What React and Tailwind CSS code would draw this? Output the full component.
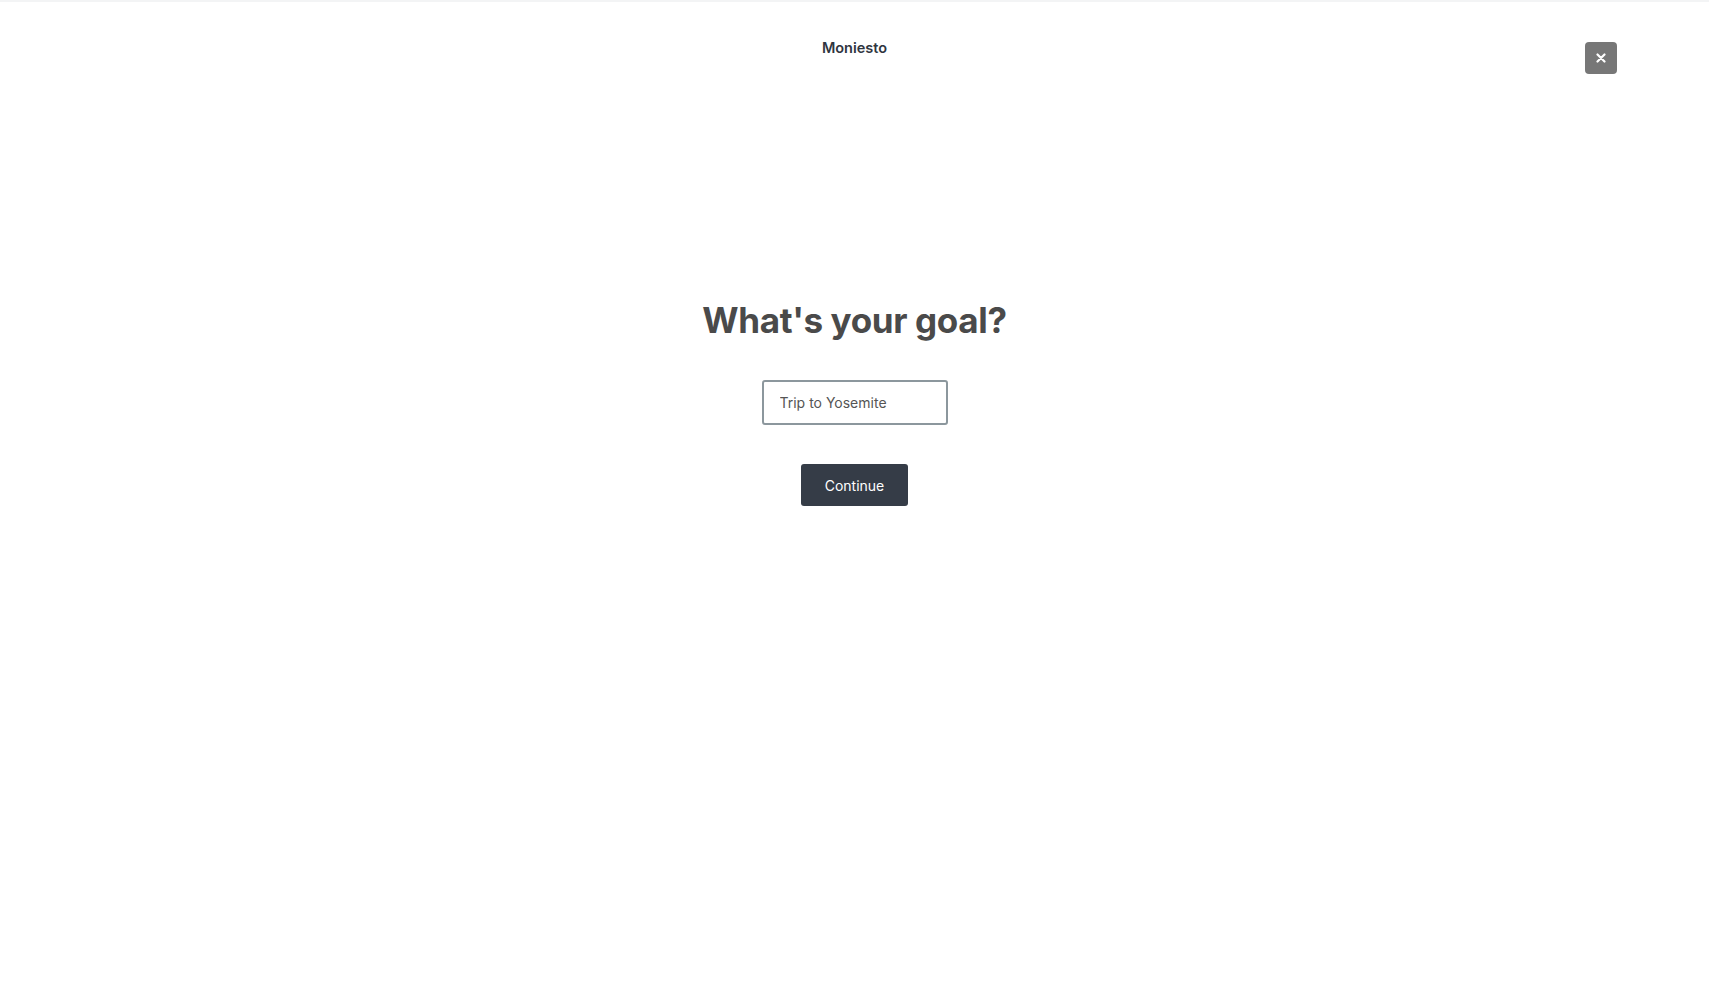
import React, { useState } from "react";

export default function App() {
  const [goal, setGoal] = useState("Trip to Yosemite");

  return (
    <div className="min-h-screen bg-white border-t-2 border-[#f3f4f5] font-['Inter',sans-serif]">
      {/* header */}
      <header className="flex items-start justify-between px-[92px] pt-[34px]">
        <div className="w-8" />
        <div className="text-[14.5px] leading-6 font-semibold text-[#2f3540]">Moniesto</div>
        <button
          aria-label="Close"
          className="mt-[6px] w-8 h-8 flex items-center justify-center rounded bg-[#777777] text-white"
        >
          <svg width="10" height="10" viewBox="0 0 10 10">
            <path d="M1.5 1.5l7 7M8.5 1.5l-7 7" stroke="currentColor" strokeWidth="2.2" strokeLinecap="round" />
          </svg>
        </button>
      </header>

      {/* goal form */}
      <main className="flex flex-col items-center pt-[226px]">
        <h1 className="text-[35px] leading-10 font-bold text-[#4a4a4a] tracking-[-0.01em]">What's your goal?</h1>
        <input
          value={goal}
          onChange={(e) => setGoal(e.target.value)}
          className="mt-[40px] w-[186px] h-[45px] px-4 rounded-[3px] border-2 border-[#8c979d] text-[14px] text-[#555] outline-none"
        />
        <button className="mt-[39px] w-[107px] h-[42px] rounded-[3px] bg-[#353c47] text-white text-[14px]">
          Continue
        </button>
      </main>
    </div>
  );
}
